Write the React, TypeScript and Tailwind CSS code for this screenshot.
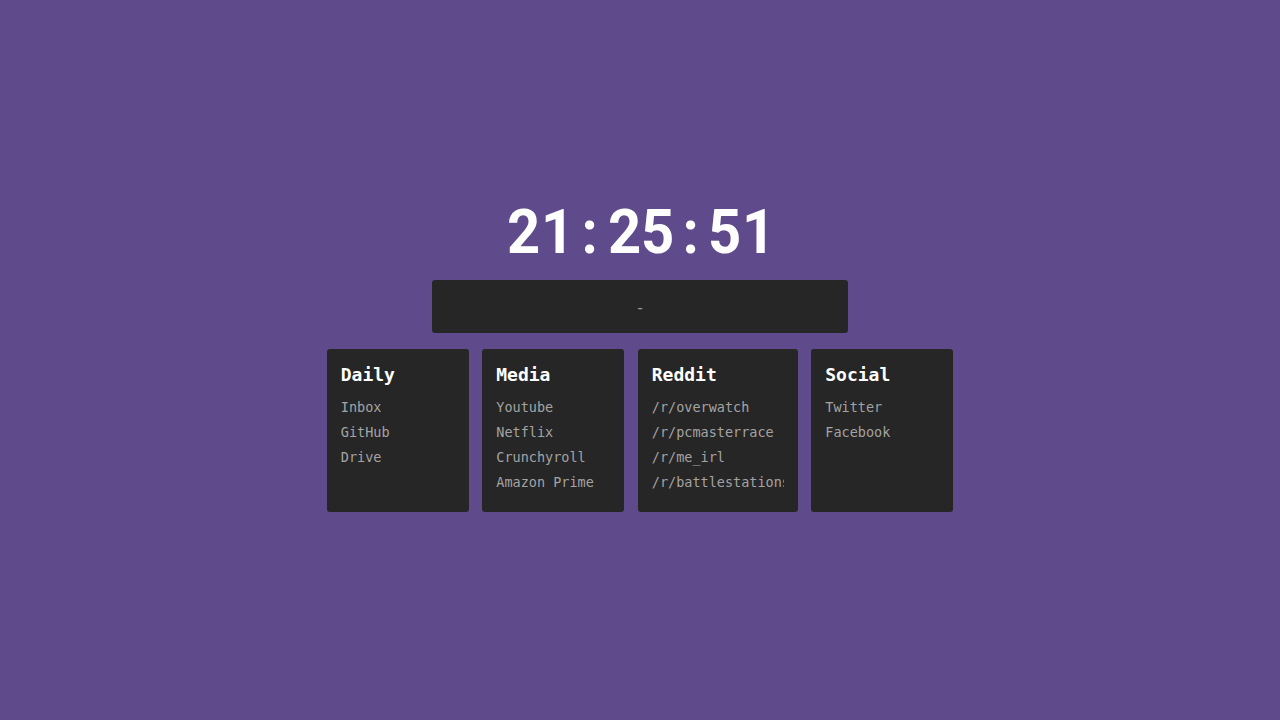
const groups = [
  { title: "Daily", width: "w-[142px]", links: ["Inbox", "GitHub", "Drive"] },
  { title: "Media", width: "w-[142px]", links: ["Youtube", "Netflix", "Crunchyroll", "Amazon Prime"] },
  {
    title: "Reddit",
    width: "w-[160px]",
    links: ["/r/overwatch", "/r/pcmasterrace", "/r/me_irl", "/r/battlestations"],
  },
  { title: "Social", width: "w-[142px]", links: ["Twitter", "Facebook"] },
];

const mono = "font-['DejaVu_Sans_Mono','Liberation_Mono',monospace]";

function Clock({ time }: { time: string }) {
  return (
    <div className="flex font-['Roboto',sans-serif] font-bold text-white text-[61px] leading-[62px]">
      {time.split("").map((ch, i) => (
        <span key={i} className="inline-block w-[33.5px] text-center">
          <span className="inline-block scale-x-[0.95]">{ch}</span>
        </span>
      ))}
    </div>
  );
}

export default function App() {
  return (
    <div className="min-h-screen w-full bg-[#5f4b8b] flex flex-col items-center pt-[201px]">
      <Clock time="21:25:51" />

      <div
        className={`mt-[17px] w-[416px] h-[53px] bg-[#262626] rounded-[3px] flex items-center justify-center pt-[2px] text-[#9a9a9a] text-[16px] ${mono}`}
      >
        -
      </div>

      <div className="mt-[16px] flex gap-[13.5px]">
        {groups.map((g) => (
          <div
            key={g.title}
            className={`${g.width} bg-[#262626] rounded-[3px] px-[14px] pt-[15px] pb-[17px] overflow-hidden ${mono}`}
          >
            <h2 className="text-white font-bold text-[18px] leading-[22px]">{g.title}</h2>
            <ul className="mt-[9px]">
              {g.links.map((l) => (
                <li
                  key={l}
                  className="text-[#a3a3a3] text-[13.5px] leading-[25px] whitespace-nowrap overflow-hidden"
                >
                  {l}
                </li>
              ))}
            </ul>
          </div>
        ))}
      </div>
    </div>
  );
}
